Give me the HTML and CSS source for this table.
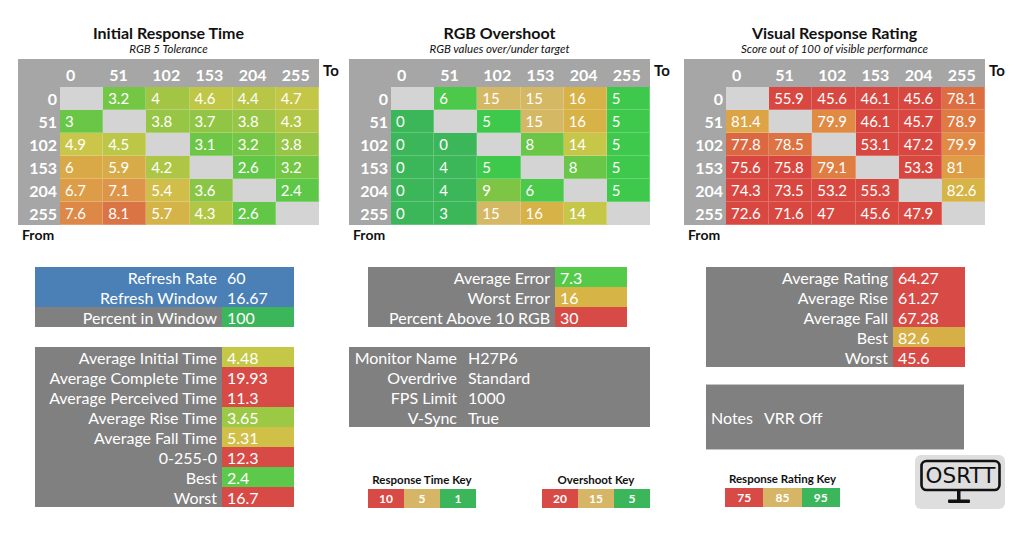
FILE: index.html
```html
<!DOCTYPE html>
<html lang="en">
<head>
<meta charset="utf-8">
<title>OSRTT Results</title>
<link rel="stylesheet" href="styles.css">
</head>
<body>
<div class="page">
  <div class="top">
    <section class="panel p1">
      <div class="titles"><h2>Initial Response Time</h2><p>RGB 5 Tolerance</p></div>
      <div class="hm-row">
        <div class="hm">
          <div class="hd"></div><div class="hd">0</div><div class="hd">51</div><div class="hd">102</div><div class="hd">153</div><div class="hd">204</div><div class="hd">255</div>
          <div class="rh">0</div><div class="c d"></div><div class="c" style="background:#74c645">3.2</div><div class="c" style="background:#a2c545">4</div><div class="c" style="background:#c0c747">4.6</div><div class="c" style="background:#b7c646">4.4</div><div class="c" style="background:#c4c648">4.7</div>
          <div class="rh">51</div><div class="c" style="background:#6ac646">3</div><div class="c d"></div><div class="c" style="background:#97c545">3.8</div><div class="c" style="background:#91c545">3.7</div><div class="c" style="background:#97c545">3.8</div><div class="c" style="background:#b2c646">4.3</div>
          <div class="rh">102</div><div class="c" style="background:#cac649">4.9</div><div class="c" style="background:#bcc747">4.5</div><div class="c d"></div><div class="c" style="background:#6ec646">3.1</div><div class="c" style="background:#74c645">3.2</div><div class="c" style="background:#97c545">3.8</div>
          <div class="rh">153</div><div class="c" style="background:#d9a947">6</div><div class="c" style="background:#d7ac48">5.9</div><div class="c" style="background:#adc646">4.2</div><div class="c d"></div><div class="c" style="background:#62c747">2.6</div><div class="c" style="background:#74c645">3.2</div>
          <div class="rh">204</div><div class="c" style="background:#dc9c48">6.7</div><div class="c" style="background:#dd9649">7.1</div><div class="c" style="background:#d1bd4a">5.4</div><div class="c" style="background:#8bc545">3.6</div><div class="c d"></div><div class="c" style="background:#5dc748">2.4</div>
          <div class="rh">255</div><div class="c" style="background:#de8847">7.6</div><div class="c" style="background:#db7444">8.1</div><div class="c" style="background:#d4b449">5.7</div><div class="c" style="background:#b2c646">4.3</div><div class="c" style="background:#62c747">2.6</div><div class="c d"></div>
        </div>
        <div class="to">To</div>
      </div>
      <div class="from">From</div>
    </section>

    <section class="panel p2">
      <div class="titles"><h2>RGB Overshoot</h2><p>RGB values over/under target</p></div>
      <div class="hm-row">
        <div class="hm">
          <div class="hd"></div><div class="hd">0</div><div class="hd">51</div><div class="hd">102</div><div class="hd">153</div><div class="hd">204</div><div class="hd">255</div>
          <div class="rh">0</div><div class="c d"></div><div class="c" style="background:#4cc84a">6</div><div class="c" style="background:#d5b864">15</div><div class="c" style="background:#d5b864">15</div><div class="c" style="background:#d7b247">16</div><div class="c" style="background:#3ec94c">5</div>
          <div class="rh">51</div><div class="c" style="background:#3bb75a">0</div><div class="c d"></div><div class="c" style="background:#3ec94c">5</div><div class="c" style="background:#d5b864">15</div><div class="c" style="background:#d7b247">16</div><div class="c" style="background:#3ec94c">5</div>
          <div class="rh">102</div><div class="c" style="background:#3bb75a">0</div><div class="c" style="background:#3bb75a">0</div><div class="c d"></div><div class="c" style="background:#69c646">8</div><div class="c" style="background:#c6c648">14</div><div class="c" style="background:#3ec94c">5</div>
          <div class="rh">153</div><div class="c" style="background:#3bb75a">0</div><div class="c" style="background:#3bb75a">4</div><div class="c" style="background:#3ec94c">5</div><div class="c d"></div><div class="c" style="background:#69c646">8</div><div class="c" style="background:#3ec94c">5</div>
          <div class="rh">204</div><div class="c" style="background:#3bb75a">0</div><div class="c" style="background:#3bb75a">4</div><div class="c" style="background:#7ec545">9</div><div class="c" style="background:#4cc84a">6</div><div class="c d"></div><div class="c" style="background:#3ec94c">5</div>
          <div class="rh">255</div><div class="c" style="background:#3bb75a">0</div><div class="c" style="background:#3bb75a">3</div><div class="c" style="background:#d5b864">15</div><div class="c" style="background:#d7b247">16</div><div class="c" style="background:#c6c648">14</div><div class="c d"></div>
        </div>
        <div class="to">To</div>
      </div>
      <div class="from">From</div>
    </section>

    <section class="panel p3">
      <div class="titles"><h2>Visual Response Rating</h2><p>Score out of 100 of visible performance</p></div>
      <div class="hm-row">
        <div class="hm">
          <div class="hd"></div><div class="hd">0</div><div class="hd">51</div><div class="hd">102</div><div class="hd">153</div><div class="hd">204</div><div class="hd">255</div>
          <div class="rh">0</div><div class="c d"></div><div class="c" style="background:#d84840">55.9</div><div class="c" style="background:#d84840">45.6</div><div class="c" style="background:#d84840">46.1</div><div class="c" style="background:#d84840">45.6</div><div class="c" style="background:#dd6e42">78.1</div>
          <div class="rh">51</div><div class="c" style="background:#dca446">81.4</div><div class="c d"></div><div class="c" style="background:#e08a44">79.9</div><div class="c" style="background:#d84840">46.1</div><div class="c" style="background:#d84840">45.7</div><div class="c" style="background:#de7a42">78.9</div>
          <div class="rh">102</div><div class="c" style="background:#dc6842">77.8</div><div class="c" style="background:#dd7242">78.5</div><div class="c d"></div><div class="c" style="background:#d84840">53.1</div><div class="c" style="background:#d84840">47.2</div><div class="c" style="background:#e08a44">79.9</div>
          <div class="rh">153</div><div class="c" style="background:#d84840">75.6</div><div class="c" style="background:#d84840">75.8</div><div class="c" style="background:#df7e42">79.1</div><div class="c d"></div><div class="c" style="background:#d84840">53.3</div><div class="c" style="background:#de9c44">81</div>
          <div class="rh">204</div><div class="c" style="background:#d84840">74.3</div><div class="c" style="background:#d84840">73.5</div><div class="c" style="background:#d84840">53.2</div><div class="c" style="background:#d84840">55.3</div><div class="c d"></div><div class="c" style="background:#d6b446">82.6</div>
          <div class="rh">255</div><div class="c" style="background:#d84840">72.6</div><div class="c" style="background:#d84840">71.6</div><div class="c" style="background:#d84840">47</div><div class="c" style="background:#d84840">45.6</div><div class="c" style="background:#d84840">47.9</div><div class="c d"></div>
        </div>
        <div class="to">To</div>
      </div>
      <div class="from">From</div>
    </section>
  </div>

  <div class="bottom">
    <div class="col col1">
      <div class="stat">
        <div class="l blue">Refresh Rate</div><div class="v blue">60</div>
        <div class="l blue">Refresh Window</div><div class="v blue">16.67</div>
        <div class="l">Percent in Window</div><div class="v green">100</div>
      </div>
      <div class="stat gap">
        <div class="l">Average Initial Time</div><div class="v" style="background:#c4c846">4.48</div>
        <div class="l">Average Complete Time</div><div class="v red">19.93</div>
        <div class="l">Average Perceived Time</div><div class="v red">11.3</div>
        <div class="l">Average Rise Time</div><div class="v" style="background:#9cc945">3.65</div>
        <div class="l">Average Fall Time</div><div class="v" style="background:#d0c048">5.31</div>
        <div class="l">0-255-0</div><div class="v red">12.3</div>
        <div class="l">Best</div><div class="v" style="background:#5cc94a">2.4</div>
        <div class="l">Worst</div><div class="v red">16.7</div>
      </div>
    </div>

    <div class="col col2">
      <div class="stat inset">
        <div class="l">Average Error</div><div class="v" style="background:#55c94a">7.3</div>
        <div class="l">Worst Error</div><div class="v" style="background:#d6b446">16</div>
        <div class="l">Percent Above 10 RGB</div><div class="v red">30</div>
      </div>
      <div class="info gap">
        <div class="l">Monitor Name</div><div class="v">H27P6</div>
        <div class="l">Overdrive</div><div class="v">Standard</div>
        <div class="l">FPS Limit</div><div class="v">1000</div>
        <div class="l">V-Sync</div><div class="v">True</div>
      </div>
      <div class="keys">
        <div class="key k1">
          <div class="key-title">Response Time Key</div>
          <div class="key-bar"><span class="red">10</span><span class="tan">5</span><span class="green">1</span></div>
        </div>
        <div class="key k2">
          <div class="key-title">Overshoot Key</div>
          <div class="key-bar"><span class="red">20</span><span class="tan">15</span><span class="green">5</span></div>
        </div>
      </div>
    </div>

    <div class="col col3">
      <div class="stat">
        <div class="l">Average Rating</div><div class="v red">64.27</div>
        <div class="l">Average Rise</div><div class="v red">61.27</div>
        <div class="l">Average Fall</div><div class="v red">67.28</div>
        <div class="l">Best</div><div class="v" style="background:#d6b046">82.6</div>
        <div class="l">Worst</div><div class="v red">45.6</div>
      </div>
      <div class="notes"><span class="notes-label">Notes</span><span>VRR Off</span></div>
      <div class="foot">
        <div class="key k3">
          <div class="key-title">Response Rating Key</div>
          <div class="key-bar"><span class="red">75</span><span class="tan">85</span><span class="green">95</span></div>
        </div>
        <div class="logo">
          <svg width="90" height="54" viewBox="0 0 90 54">
            <rect x="6.5" y="6" width="78" height="29" rx="5" ry="5" fill="none" stroke="#111" stroke-width="2.6"/>
            <text x="45.5" y="28" text-anchor="middle" class="logo-text">OSRTT</text>
            <rect x="42" y="35" width="3.5" height="10" fill="#111"/>
            <rect x="33" y="44.5" width="22" height="3.5" rx="1" fill="#111"/>
          </svg>
        </div>
      </div>
    </div>
  </div>
</div>
</body>
</html>
```

FILE: styles.css
```css
* { box-sizing: border-box; }

body {
  margin: 0;
  background: #ffffff;
  font-family: Lato, "Liberation Sans", sans-serif;
  color: #111;
}

.page {
  width: 1024px;
  height: 552px;
  overflow: hidden;
}

/* ---------- Heatmaps ---------- */
.top {
  display: flex;
  padding-top: 24px;
}

.panel {
  width: 301px;
  display: flex;
  flex-direction: column;
}
.p1 { margin-left: 18px; }
.p2 { margin-left: 30px; }
.p3 { margin-left: 34px; }

.titles { text-align: center; margin-bottom: 3px; }
.titles h2 {
  margin: 0;
  font-size: 16px;
  line-height: 18px;
  font-weight: 700;
  color: #111;
}
.titles p {
  margin: 0;
  font-size: 11.5px;
  line-height: 14px;
  font-style: italic;
  color: #111;
}

.hm-row { display: flex; }

.hm {
  width: 301px;
  flex: none;
  display: grid;
  grid-template-columns: 42px repeat(6, 1fr);
  grid-template-rows: 28px repeat(6, 23px);
  background: #a6a6a6;
  color: #fff;
}

.hd {
  font-weight: 700;
  font-size: 16px;
  padding: 3px 0 0 6px;
  line-height: 26px;
}

.rh {
  font-weight: 700;
  font-size: 16px;
  line-height: 23px;
  text-align: right;
  padding-right: 3px;
}

.c {
  font-size: 15px;
  line-height: 23px;
  padding-left: 5px;
  box-shadow: inset -1px -1px 0 rgba(255, 255, 255, 0.22);
}
.c.d { background: #d4d4d4; box-shadow: none; }

.to {
  width: 0;
  margin-left: 4px;
  white-space: nowrap;
  font-weight: 700;
  font-size: 15px;
  line-height: 22px;
  color: #111;
}

.from {
  padding-left: 4px;
  font-weight: 700;
  font-size: 14px;
  line-height: 19px;
  color: #111;
}

/* ---------- Bottom tables ---------- */
.bottom {
  display: flex;
  margin-top: 23px;
}

.col { display: flex; flex-direction: column; }
.col1 { margin-left: 35px; width: 259px; }
.col2 { margin-left: 55px; width: 301px; }
.col3 { margin-left: 56px; width: 299px; }

.stat {
  width: 259px;
  display: grid;
  grid-template-columns: 1fr 72px;
  grid-auto-rows: 20px;
  color: #fff;
  font-size: 16px;
  line-height: 21px;
}
.stat.inset { margin-left: 19px; }
.gap { margin-top: 20px; }

.stat .l {
  background: #808080;
  text-align: right;
  padding-right: 5px;
  white-space: nowrap;
}
.stat .v {
  background: #808080;
  padding-left: 5px;
}

.blue { background: #4a80b6 !important; }
.green { background: #3cb65a !important; }
.red { background: #d74a46 !important; }
.tan { background: #d6b566 !important; }

.info {
  width: 301px;
  display: grid;
  grid-template-columns: 113px 1fr;
  grid-auto-rows: 20px;
  background: #808080;
  color: #fff;
  font-size: 16px;
  line-height: 21px;
}
.info .l { text-align: right; padding-right: 5px; white-space: nowrap; }
.info .v { padding-left: 6px; }

.notes {
  margin-top: 17px;
  width: 258px;
  height: 66px;
  background: #808080;
  color: #fff;
  font-size: 16px;
  display: flex;
  align-items: center;
  padding-left: 5px;
  border-top: 1px solid #c4c4c4;
  border-bottom: 1px solid #c4c4c4;
}
.notes-label { margin-right: 11px; }

/* ---------- Keys ---------- */
.keys {
  display: flex;
  margin-top: 44px;
}
.key { width: 115px; }
.k1 { margin-left: 19px; }
.k2 { margin-left: 66px; }
.k3 { margin-left: 19px; margin-bottom: 2px; }

.key-title {
  text-align: center;
  font-weight: 700;
  font-size: 11.5px;
  line-height: 18px;
  color: #111;
  white-space: nowrap;
}
.key-bar {
  display: flex;
  height: 19px;
}
.key-bar span {
  flex: 1;
  text-align: center;
  color: #fff;
  font-weight: 700;
  font-size: 12px;
  line-height: 19px;
}

.foot {
  display: flex;
  align-items: flex-end;
}

.logo {
  margin-left: 75px;
  margin-top: 5px;
  width: 90px;
  height: 54px;
  background: #dedede;
  border-radius: 6px;
}
.logo svg { display: block; }
.logo-text {
  font-family: "DejaVu Sans", sans-serif;
  font-size: 21.5px;
  fill: #111;
}
```
